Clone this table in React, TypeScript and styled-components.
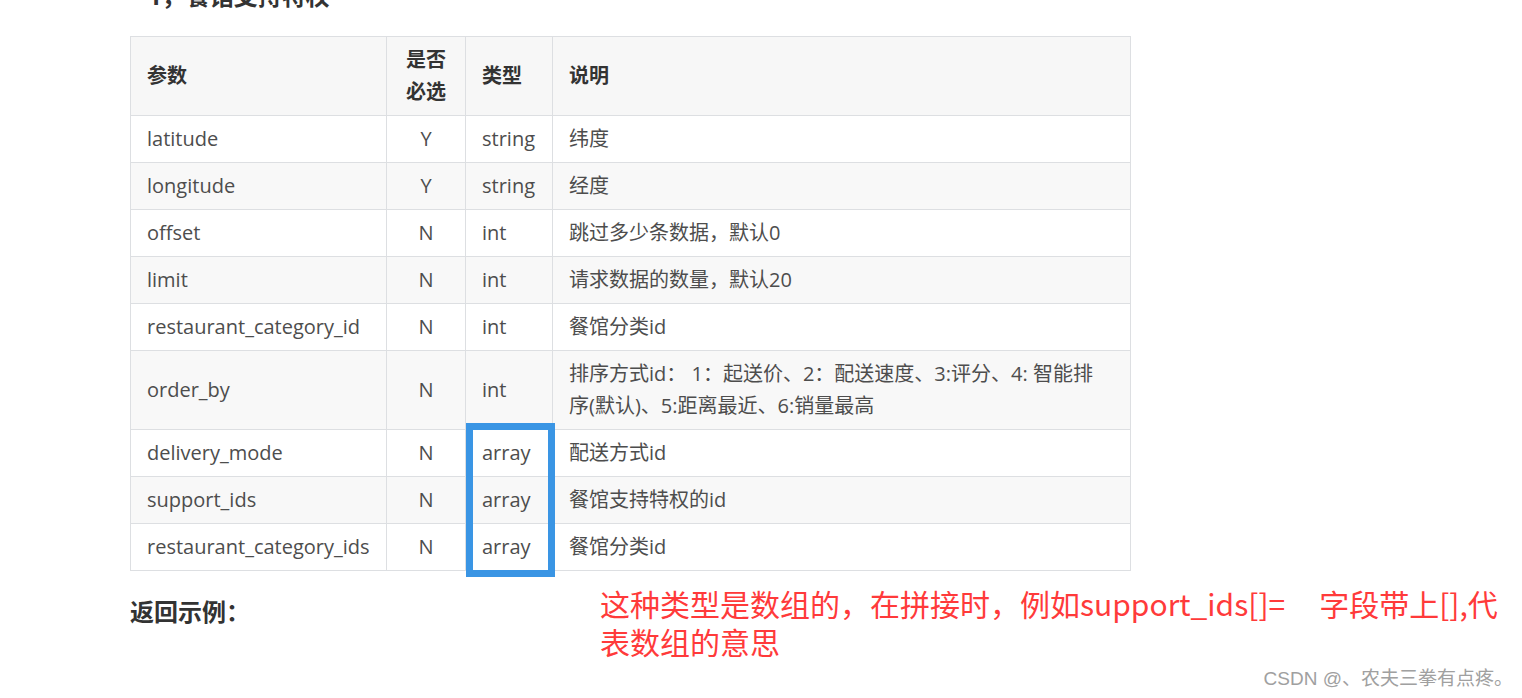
import React from "react";
import styled, { createGlobalStyle } from "styled-components";

const Global = createGlobalStyle`
  html, body { margin: 0; padding: 0; background: #fff; }
  body { font-family: "Open Sans", "Noto Sans CJK SC", sans-serif; color: #4d4d4d; }
`;

const Page = styled.div`
  position: relative;
  width: 1522px;
  height: 698px;
  overflow: hidden;
  box-sizing: border-box;
  padding-left: 130px;
`;

const Heading = styled.h4`
  margin: -19px 0 25px;
  font-size: 24px;
  line-height: 30px;
  font-weight: 700;
  color: #333;
  padding-left: 18px;
`;

const Table = styled.table`
  width: 1000px;
  border-collapse: collapse;
  table-layout: fixed;
  font-size: 20px;
  line-height: 32px;
`;

const Th = styled.th<{ $w: number; $center?: boolean }>`
  width: ${(p) => p.$w}px;
  box-sizing: border-box;
  padding: 7px 16px;
  background: #f7f7f7;
  border: 1px solid #dddfe2;
  font-weight: 700;
  color: #333;
  text-align: ${(p) => (p.$center ? "center" : "left")};
`;

const Tr = styled.tr<{ $alt: boolean }>`
  background: ${(p) => (p.$alt ? "#f8f8f8" : "#fff")};
`;

const Td = styled.td<{ $center?: boolean }>`
  padding: 7px 16px;
  border: 1px solid #dddfe2;
  color: #4d4d4d;
  text-align: ${(p) => (p.$center ? "center" : "left")};
  vertical-align: middle;
  white-space: nowrap;
`;

const TableWrap = styled.div`
  position: relative;
  width: 1000px;
`;

const Highlight = styled.div`
  position: absolute;
  left: 336px;
  top: 387px;
  width: 89px;
  height: 154px;
  box-sizing: border-box;
  border: 7px solid #3a95e4;
  pointer-events: none;
`;

const Bottom = styled.div`
  display: flex;
  align-items: flex-start;
  margin-top: 13px;
`;

const SubHeading = styled.h4`
  margin: 13px 0 0;
  width: 470px;
  font-size: 24px;
  line-height: 30px;
  font-weight: 700;
  color: #333;
`;

const Note = styled.p`
  margin: 0;
  font-family: "Noto Sans CJK SC", "Noto Sans", sans-serif;
  font-size: 30px;
  line-height: 38px;
  color: #ff3a3a;
  white-space: nowrap;
`;

const Gap = styled.span`
  display: inline-block;
  width: 34px;
`;

const Watermark = styled.div`
  position: absolute;
  right: 9px;
  bottom: 8px;
  font-family: "Liberation Sans", "Noto Sans CJK SC", sans-serif;
  font-size: 19px;
  line-height: 22px;
  color: #a0a0a0;
`;

type Row = { name: string; req: string; type: string; desc: React.ReactNode };

const rows: Row[] = [
  { name: "latitude", req: "Y", type: "string", desc: "纬度" },
  { name: "longitude", req: "Y", type: "string", desc: "经度" },
  { name: "offset", req: "N", type: "int", desc: "跳过多少条数据，默认0" },
  { name: "limit", req: "N", type: "int", desc: "请求数据的数量，默认20" },
  { name: "restaurant_category_id", req: "N", type: "int", desc: "餐馆分类id" },
  {
    name: "order_by",
    req: "N",
    type: "int",
    desc: (
      <>
        排序方式id： 1：起送价、2：配送速度、3:评分、4: 智能排
        <br />
        序(默认)、5:距离最近、6:销量最高
      </>
    ),
  },
  { name: "delivery_mode", req: "N", type: "array", desc: "配送方式id" },
  { name: "support_ids", req: "N", type: "array", desc: "餐馆支持特权的id" },
  { name: "restaurant_category_ids", req: "N", type: "array", desc: "餐馆分类id" },
];

export default function App() {
  return (
    <>
      <Global />
      <Page>
        <Heading>1，餐馆支持特权</Heading>
        <TableWrap>
          <Table>
            <thead>
              <tr>
                <Th $w={256}>参数</Th>
                <Th $w={79} $center>
                  是否必选
                </Th>
                <Th $w={87}>类型</Th>
                <Th $w={578}>说明</Th>
              </tr>
            </thead>
            <tbody>
              {rows.map((r, i) => (
                <Tr key={r.name} $alt={i % 2 === 1}>
                  <Td>{r.name}</Td>
                  <Td $center>{r.req}</Td>
                  <Td>{r.type}</Td>
                  <Td>{r.desc}</Td>
                </Tr>
              ))}
            </tbody>
          </Table>
          <Highlight />
        </TableWrap>
        <Bottom>
          <SubHeading>返回示例：</SubHeading>
          <Note>
            这种类型是数组的，在拼接时，例如support_ids[]=
            <Gap />
            字段带上[],代
            <br />
            表数组的意思
          </Note>
        </Bottom>
        <Watermark>CSDN @、农夫三拳有点疼。</Watermark>
      </Page>
    </>
  );
}
